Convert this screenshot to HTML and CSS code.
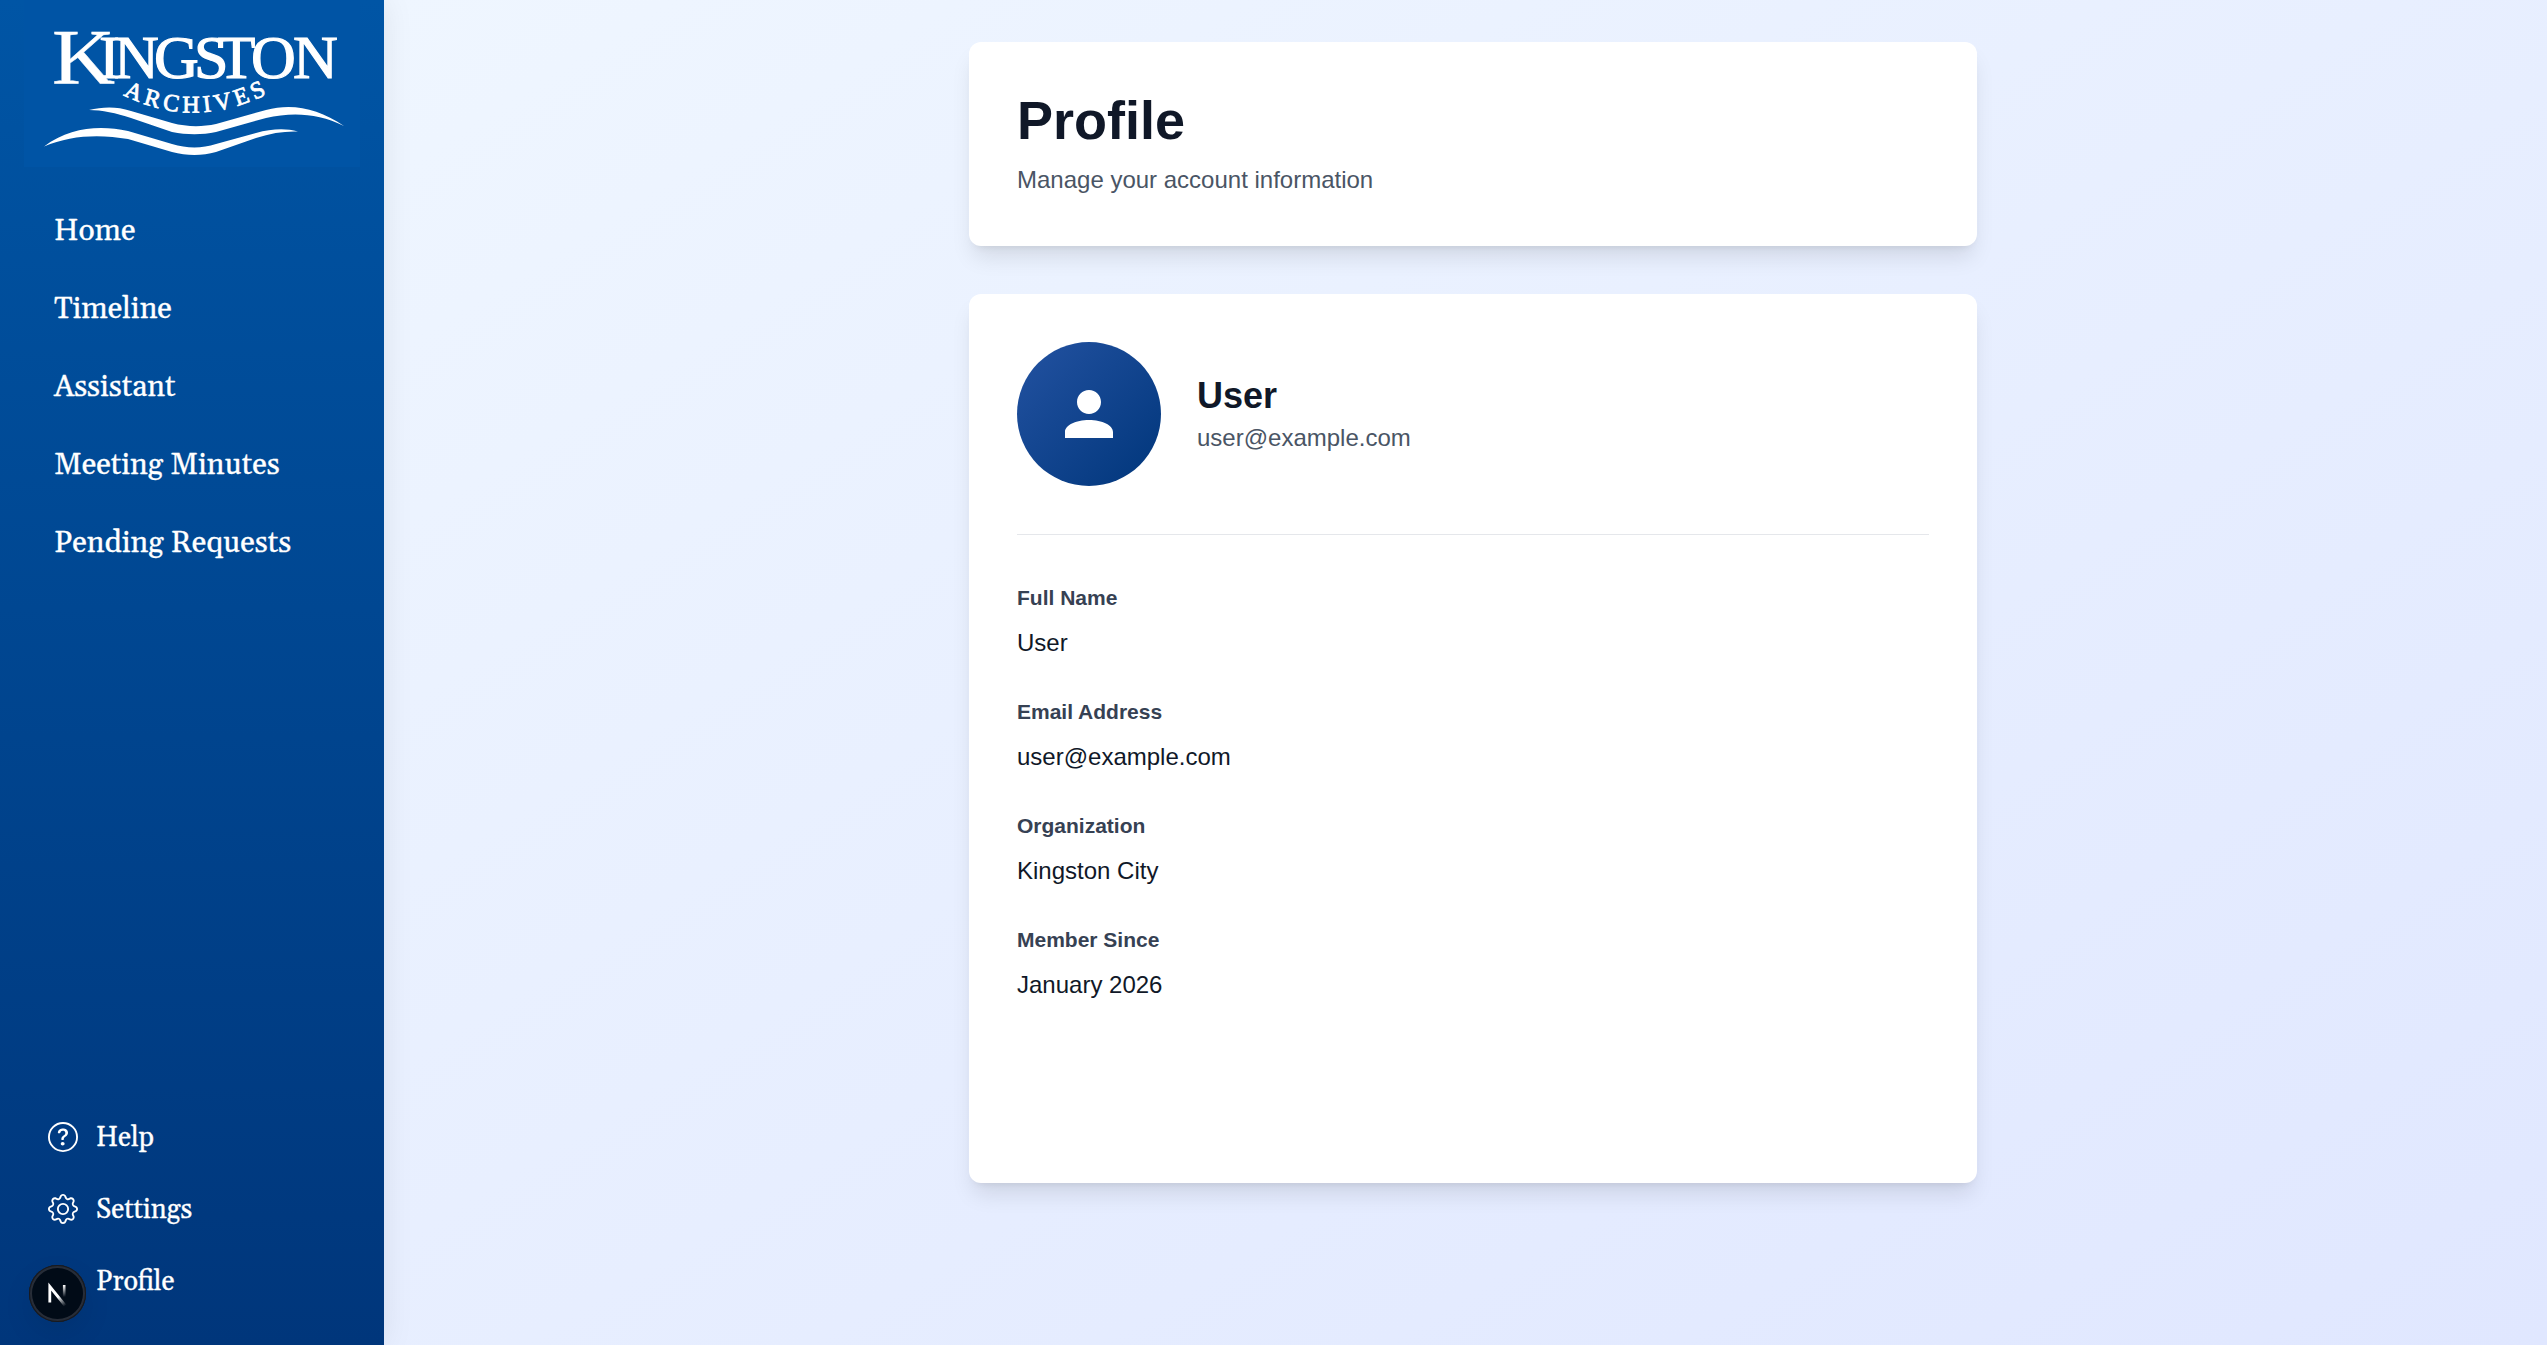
FILE: index.html
```html
<!DOCTYPE html>
<html lang="en">
<head>
<meta charset="UTF-8">
<title>Profile</title>
<link rel="stylesheet" href="styles.css">
</head>
<body>
<aside class="sidebar">
  <div class="logo">
    <svg viewBox="0 0 336 167" width="336" height="167">
      <defs>
        <path id="arc" d="M99 95 Q171 131 245 93"/>
      </defs>
      <g class="logo-name">
        <text class="big" x="28" y="82.5" textLength="63" lengthAdjust="spacingAndGlyphs">K</text>
        <text x="75 90 130 170 193.5 227 269" y="77.5">INGSTON</text>
      </g>
      <text class="logo-sub"><textPath href="#arc">ARCHIVES</textPath></text>
      <path class="wave" d="M65 110 C78 107 92 106 107 111 L148 123 C163 127 178 127 192 124 L242 110 C268 103 294 108 320 126 C294 113 268 112 242 118 L192 132 C178 135 163 135 148 132 L107 118 C92 113 78 110 65 110Z"/>
      <path class="wave" d="M20 146.500 C46 127 76 125 104 131 L148 144 C163 148.500 178 148.500 192 144 L232 133 C247 129 261 128 274 131.500 C261 131 247 133 232 138 L192 152 C178 156 163 156 148 152 L104 139 C76 134 46 135 20 146.500Z"/>
    </svg>
  </div>
  <nav class="menu">
    <a>Home</a>
    <a>Timeline</a>
    <a>Assistant</a>
    <a>Meeting Minutes</a>
    <a>Pending Requests</a>
  </nav>
  <nav class="bottom-menu">
    <a>
      <svg viewBox="0 0 16 16" width="30" height="30" fill="currentColor"><path d="M8 15A7 7 0 1 1 8 1a7 7 0 0 1 0 14m0 1A8 8 0 1 0 8 0a8 8 0 0 0 0 16"/><path d="M5.255 5.786a.237.237 0 0 0 .241.247h.825c.138 0 .248-.113.266-.25.09-.656.54-1.134 1.342-1.134.686 0 1.314.343 1.314 1.168 0 .635-.374.927-.965 1.371-.673.489-1.206 1.06-1.168 1.987l.003.217a.25.25 0 0 0 .25.246h.811a.25.25 0 0 0 .25-.25v-.105c0-.718.273-.927 1.01-1.486.609-.463 1.244-.977 1.244-2.056 0-1.511-1.276-2.241-2.673-2.241-1.267 0-2.655.59-2.75 2.286m1.557 5.763c0 .533.425.927 1.01.927.609 0 1.028-.394 1.028-.927 0-.552-.42-.94-1.029-.94-.584 0-1.009.388-1.009.94"/></svg>
      <span>Help</span>
    </a>
    <a>
      <svg viewBox="0 0 16 16" width="30" height="30" fill="currentColor"><path d="M8 4.754a3.246 3.246 0 1 0 0 6.492 3.246 3.246 0 0 0 0-6.492M5.754 8a2.246 2.246 0 1 1 4.492 0 2.246 2.246 0 0 1-4.492 0"/><path d="M9.796 1.343c-.527-1.79-3.065-1.79-3.592 0l-.094.319a.873.873 0 0 1-1.255.52l-.292-.16c-1.64-.892-3.433.902-2.54 2.541l.159.292a.873.873 0 0 1-.52 1.255l-.319.094c-1.79.527-1.79 3.065 0 3.592l.319.094a.873.873 0 0 1 .52 1.255l-.16.292c-.892 1.64.901 3.434 2.541 2.54l.292-.159a.873.873 0 0 1 1.255.52l.094.319c.527 1.79 3.065 1.79 3.592 0l.094-.319a.873.873 0 0 1 1.255-.52l.292.16c1.64.893 3.434-.902 2.54-2.541l-.159-.292a.873.873 0 0 1 .52-1.255l.319-.094c1.79-.527 1.79-3.065 0-3.592l-.319-.094a.873.873 0 0 1-.52-1.255l.16-.292c.893-1.64-.902-3.433-2.541-2.54l-.292.159a.873.873 0 0 1-1.255-.52zm-2.633.283c.246-.835 1.428-.835 1.674 0l.094.319a1.873 1.873 0 0 0 2.693 1.115l.291-.16c.764-.415 1.6.42 1.184 1.185l-.159.292a1.873 1.873 0 0 0 1.116 2.692l.318.094c.835.246.835 1.428 0 1.674l-.319.094a1.873 1.873 0 0 0-1.115 2.693l.16.291c.415.764-.42 1.6-1.185 1.184l-.291-.159a1.873 1.873 0 0 0-2.693 1.116l-.094.318c-.246.835-1.428.835-1.674 0l-.094-.319a1.873 1.873 0 0 0-2.692-1.115l-.292.16c-.764.415-1.6-.42-1.184-1.185l.159-.291A1.873 1.873 0 0 0 1.945 8.93l-.319-.094c-.835-.246-.835-1.428 0-1.674l.319-.094A1.873 1.873 0 0 0 3.06 4.377l-.16-.292c-.415-.764.42-1.6 1.185-1.184l.292.159a1.873 1.873 0 0 0 2.692-1.115z"/></svg>
      <span>Settings</span>
    </a>
    <a><i class="no-icon"></i><span>Profile</span></a>
  </nav>
</aside>
<div class="dev-badge">
  <svg viewBox="0 0 57 57" width="57" height="57" fill="none">
    <defs>
      <linearGradient id="diag" gradientUnits="userSpaceOnUse" x1="29" y1="32" x2="36" y2="41"><stop stop-color="#fff"/><stop offset="1" stop-color="#fff" stop-opacity="0"/></linearGradient>
      <linearGradient id="stem" gradientUnits="userSpaceOnUse" x1="35" y1="20" x2="35" y2="32"><stop stop-color="#fff"/><stop offset="1" stop-color="#fff" stop-opacity="0"/></linearGradient>
    </defs>
    <path d="M20.800 37.500V21.500L36.500 41" stroke="url(#diag)" stroke-width="2.8"/>
    <path d="M35.200 20v13" stroke="url(#stem)" stroke-width="2.6"/>
  </svg>
</div>
<main class="content">
  <section class="card">
    <h1>Profile</h1>
    <p class="subtitle">Manage your account information</p>
  </section>
  <section class="card details">
    <div class="user">
      <div class="avatar">
        <svg viewBox="0 0 24 24" width="72" height="72" fill="#fff"><path d="M12 12c2.21 0 4-1.79 4-4s-1.79-4-4-4-4 1.79-4 4 1.79 4 4 4zm0 2c-4.42 0-8 1.79-8 4v2h16v-2c0-2.21-3.58-4-8-4z"/></svg>
      </div>
      <div>
        <h2>User</h2>
        <p class="email">user@example.com</p>
      </div>
    </div>
    <dl>
      <div><dt>Full Name</dt><dd>User</dd></div>
      <div><dt>Email Address</dt><dd>user@example.com</dd></div>
      <div><dt>Organization</dt><dd>Kingston City</dd></div>
      <div><dt>Member Since</dt><dd>January 2026</dd></div>
    </dl>
  </section>
</main>
</body>
</html>
```
FILE: styles.css
```css
* {
    box-sizing: border-box;
    margin: 0;
    padding: 0;
}
body {
    display: flex;
    height: 1345px;
    overflow: hidden;
    font-family: "Liberation Sans", Arial, sans-serif;
    font-size: 24px;
    line-height: 36px;
    color: #101828;
}
.sidebar {
    position: relative;
    z-index: 1;
    display: flex;
    flex-direction: column;
    width: 384px;
    flex-shrink: 0;
    color: white;
    font-family: Georgia, Gelasio, "Liberation Serif", serif;
    background: linear-gradient(to bottom, #0055a5, #00367b);
    box-shadow: 0 0 30px rgba(0, 0, 0, 0.08);
}
.logo {
    height: 167px;
    padding-left: 24px;
}
.logo svg {
    display: block;
    background: #0054a5;
}
.logo text {
    fill: white;
    stroke: white;
    stroke-width: 1.2;
    font-family: "Liberation Serif", serif;
}
.logo-name {
    font-size: 62px;
}
.logo .big {
    font-size: 79px;
    stroke-width: 0.4;
}
.logo .logo-sub {
    font-size: 24px;
    letter-spacing: 4.2px;
    stroke-width: 0.8;
}
.wave {
    fill: white;
}
.menu {
    display: flex;
    flex-direction: column;
    padding: 25px 54px;
    font-size: 30px;
    -webkit-text-stroke: 0.3px white;
}
.menu a {
    height: 78px;
    line-height: 78px;
    white-space: nowrap;
}
.bottom-menu {
    margin-top: auto;
    padding: 0 48px 28px;
    font-size: 27px;
    -webkit-text-stroke: 0.3px white;
}
.bottom-menu a {
    display: flex;
    align-items: center;
    gap: 18px;
    height: 72px;
}
.bottom-menu span {
    padding-top: 2px;
}
.no-icon {
    width: 30px;
}
/* floating dev tools button */
.dev-badge {
    position: absolute;
    z-index: 2;
    left: 28.5px;
    top: 1264.5px;
    width: 57px;
    height: 57px;
    border-radius: 50%;
    background: #010b17;
    box-shadow: inset 0 0 0 1px #17191f, inset 0 0 0 3px #272d38, 0 12px 30px rgba(0, 0, 0, 0.08);
}
.content {
    flex: 1;
    padding: 42px 570px 0 585px;
    background: linear-gradient(to bottom right in oklab, #eff6ff, #e0e7ff);
}
.card {
    height: 204px;
    padding: 48px;
    border-radius: 12px;
    background: white;
    box-shadow: 0 15px 22px -4px rgba(0, 0, 0, 0.1), 0 6px 9px -6px rgba(0, 0, 0, 0.1);
}
.details {
    height: 889px;
    margin-top: 48px;
}
h1 {
    font-size: 54px;
    line-height: 60px;
    margin-bottom: 12px;
}
.subtitle, .email {
    color: #4a5565;
}
.user {
    display: flex;
    align-items: center;
    gap: 36px;
    padding-bottom: 48px;
    border-bottom: 1px solid #e5e7eb;
}
.avatar {
    display: flex;
    align-items: center;
    justify-content: center;
    width: 144px;
    height: 144px;
    border-radius: 50%;
    background: linear-gradient(135deg, #2352a1, #00367b);
}
h2 {
    font-size: 36px;
    line-height: 48px;
}
dl {
    display: grid;
    gap: 36px;
    padding-top: 48px;
}
dt {
    margin-bottom: 12px;
    font-size: 21px;
    line-height: 30px;
    font-weight: bold;
    color: #364153;
}
```
